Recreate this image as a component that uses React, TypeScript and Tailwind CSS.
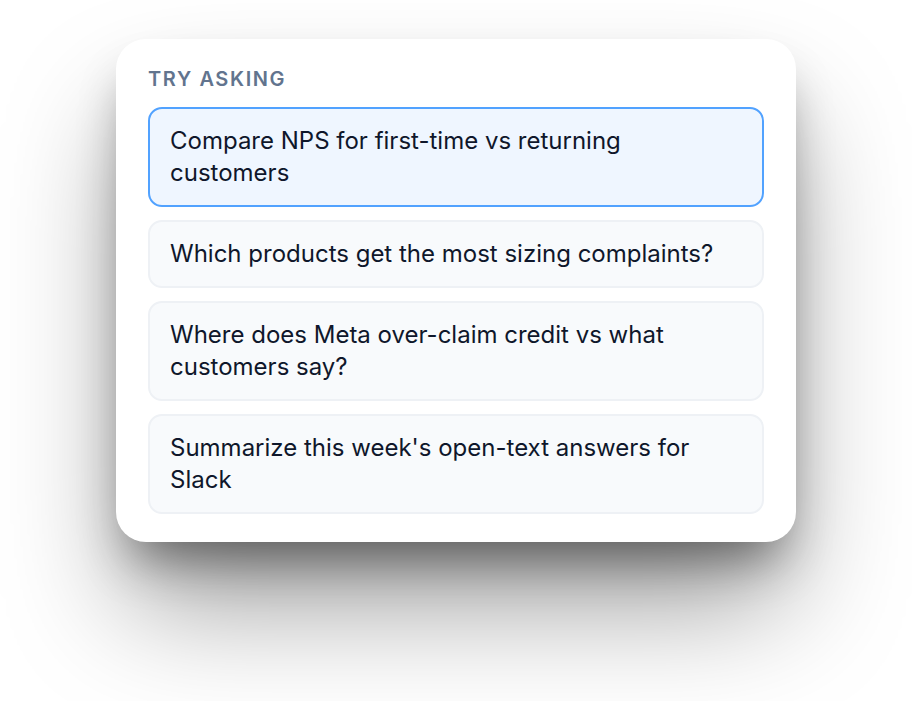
const prompts = [
  'Compare NPS for first-time vs returning customers',
  'Which products get the most sizing complaints?',
  'Where does Meta over-claim credit vs what customers say?',
  "Summarize this week's open-text answers for Slack",
]

export default function App() {
  const active = 0

  return (
    <div className="min-h-screen bg-white flex items-start justify-center pt-[39px] font-['Inter',sans-serif]">
      <div className="w-[680px] rounded-[30px] bg-white px-8 pt-[30px] pb-[28px] shadow-[0_70px_120px_-10px_rgba(0,0,0,0.4),0_30px_50px_-15px_rgba(0,0,0,0.45)]">
        <h2 className="text-[20px] leading-[20px] font-semibold tracking-[0.08em] text-slate-500 mb-[18px]">
          TRY ASKING
        </h2>
        <div className="flex flex-col gap-[13px]">
          {prompts.map((p, i) => (
            <button
              key={p}
              className={
                i === active
                  ? 'text-left rounded-[14px] border-2 border-blue-400 bg-blue-50 px-5 py-4 text-[24px] leading-[32px] text-slate-900'
                  : 'text-left rounded-[14px] border-2 border-[#eef1f5] bg-slate-50 px-5 py-4 text-[24px] leading-[32px] text-slate-900'
              }
            >
              {p}
            </button>
          ))}
        </div>
      </div>
    </div>
  )
}
